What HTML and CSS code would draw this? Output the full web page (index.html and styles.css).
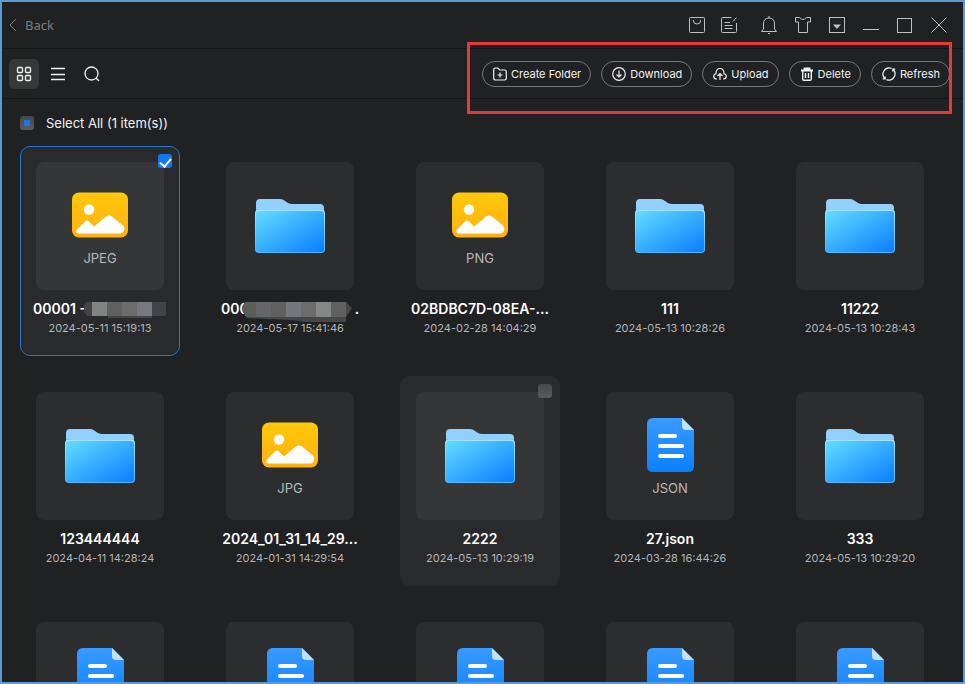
FILE: index.html
```
<!DOCTYPE html>
<html lang="en">
<head>
<meta charset="utf-8">
<title>Files</title>
<link rel="stylesheet" href="styles.css">
</head>
<body>
<svg class="sprite" aria-hidden="true">
  <defs>
    <linearGradient id="gFolder" x1="0" y1="0" x2="1" y2="1"><stop offset="0" stop-color="#64dcff"/><stop offset=".5" stop-color="#36adff"/><stop offset="1" stop-color="#0a7dff"/></linearGradient>
    <linearGradient id="gEdge" x1="0" y1="0" x2="0" y2="1"><stop offset="0" stop-color="#a5e6ff"/><stop offset="1" stop-color="#4fb6ff"/></linearGradient>
    <linearGradient id="gImage" x1="0" y1="0" x2="0" y2="1"><stop offset="0" stop-color="#ffc90a"/><stop offset="1" stop-color="#ffb012"/></linearGradient>
    <linearGradient id="gDoc" x1="0" y1="0" x2="0" y2="1"><stop offset="0" stop-color="#3a9bff"/><stop offset="1" stop-color="#0a80ff"/></linearGradient>
  </defs>
  <symbol id="folder" viewBox="0 0 70 54">
    <path d="M1 14V4q0-4 4-4h20q3 0 5 2l3 2q2 1 4 1h28q4 0 4 4v5z" fill="#92d0ff"/>
    <path d="M1 10.500h68" stroke="#78bdf3" stroke-width="1"/>
    <rect y="10.500" width="70" height="43.500" rx="4" fill="url(#gEdge)"/>
    <rect x="1" y="12" width="68" height="41" rx="3" fill="url(#gFolder)"/>
  </symbol>
  <symbol id="image" viewBox="0 0 56 45">
    <rect width="56" height="45" rx="7" fill="url(#gImage)"/>
    <circle cx="17" cy="17" r="5.200" fill="#fff"/>
    <path d="M6 41q-3-1-1-4l8-8q2-2 4 0l5 5 12-10q3-2 6 0l11 9q2 2 1 5t-4 3z" fill="#fff"/>
  </symbol>
  <symbol id="doc" viewBox="0 0 47 54">
    <path d="M6 0h29l12 12v36q0 6-6 6H6q-6 0-6-6V6q0-6 6-6z" fill="url(#gDoc)"/>
    <path d="M35 0l12 12h-8q-4 0-4-4z" fill="#c4dfff"/>
    <path d="M13 18h15M13 28h22M13 38h22" stroke="#fff" stroke-width="4" stroke-linecap="round"/>
  </symbol>
</svg>
<div class="window">
  <header class="titlebar">
    <button class="back"><svg width="8" height="14" viewBox="0 0 8 14"><path d="M7 1L1 7l6 6"/></svg>Back</button>
    <nav class="tools">
      <button aria-label="Store"><svg viewBox="0 0 18 18"><rect x="1.500" y="1.500" width="15" height="15" rx="1"/><path d="M5.500 4v1q0 3 3.500 3t3.500-3V4"/></svg></button>
      <button class="notes" aria-label="Notes"><svg viewBox="0 0 18 18"><path d="M11.500 1.500h-9q-1 0-1 1v13q0 1 1 1h13q1 0 1-1V7M4.500 6.500H10M4.500 9.500h8M4.500 12.500h8M13 5.500L16.500 1.500"/></svg></button>
      <button aria-label="Notifications"><svg viewBox="0 0 18 18"><path d="M9 0v2M3.500 13V8q0-6 5.500-6t5.500 6v5l2 2.500H1.500zM8 17.500h2"/></svg></button>
      <button aria-label="Theme"><svg viewBox="0 0 18 18"><path d="M5.500 1.500q3.500 4 7 0h4v4.500h-3v10.500h-9V6h-3V1.500z"/></svg></button>
      <button aria-label="Menu"><svg viewBox="0 0 18 18"><rect x="1.500" y="1.500" width="15" height="15"/><path class="solid" d="M5 8.500h8L9 13z"/></svg></button>
      <button aria-label="Minimize"><svg viewBox="0 0 18 18"><path d="M1 13.500h16"/></svg></button>
      <button aria-label="Maximize"><svg viewBox="0 0 18 18"><rect x="1.500" y="2.500" width="14" height="14"/></svg></button>
      <button aria-label="Close"><svg viewBox="0 0 18 18"><path d="M1.500 1.500l15 15M16.500 1.500l-15 15"/></svg></button>
    </nav>
  </header>
  <div class="toolbar">
    <div class="views">
      <button class="active" aria-label="Grid view"><svg width="16" height="16" viewBox="0 0 16 16"><rect x="1.500" y="1.500" width="5" height="5" rx="1"/><rect x="9.500" y="1.500" width="5" height="5" rx="1"/><rect x="1.500" y="9.500" width="5" height="5" rx="1"/><rect x="9.500" y="9.500" width="5" height="5" rx="1"/></svg></button>
      <button aria-label="List view"><svg width="16" height="16" viewBox="0 0 16 16"><path d="M1 2.500h14M1 8.500h14M1 13.500h14"/></svg></button>
      <button aria-label="Search"><svg width="16" height="16" viewBox="0 0 16 16"><circle cx="7.500" cy="7.500" r="6.500"/><path d="M12 12l3 3"/></svg></button>
    </div>
    <div class="actions">
      <button><svg viewBox="0 0 14 14"><path d="M.7 11V2.700Q.7 1 2.400 1h2.400l2 2h4.800q1.700 0 1.700 1.700V11.300q0 1.700-1.700 1.700H2.400Q.7 13 .7 11.300zM7 5.500v5M4.500 8h5"/></svg>Create Folder</button>
      <button><svg viewBox="0 0 14 14"><circle cx="7" cy="7" r="6.300"/><path d="M7 3.500v6.500M4.500 7.500L7 10l2.500-2.500"/></svg>Download</button>
      <button><svg viewBox="0 0 14 14"><path d="M4 12H3.500Q.7 12 .7 9.300q0-2 2.300-2.600Q3 1.500 7 1.500t4 5.200q2.300.6 2.300 2.600 0 2.700-2.800 2.700H10M7 13V6.500M4.500 9L7 6.500 9.500 9"/></svg>Upload</button>
      <button><svg viewBox="0 0 14 14"><path d="M1 3.500h12M4.500 3V1.500h5V3" stroke-width="1.800"/><path d="M2.700 3.500V12q0 1.200 1.200 1.200h6.200q1.200 0 1.200-1.200V3.500M5.500 6v5M8.500 6v5" stroke-width="1.400"/></svg>Delete</button>
      <button><svg viewBox="0 0 14 14"><path d="M3 11.700A6.200 6.200 0 0 1 9.500 1.400M11 2.300A6.200 6.200 0 0 1 4.500 12.600M.8 11.800H3.200V9.500M13.200 2.200H10.800V4.500"/></svg>Refresh</button>
    </div>
    <div class="highlight"></div>
  </div>
  <main>
    <label class="select-all"><input type="checkbox" class="check partial">Select All (1 item(s))</label>
    <ul class="files">
      <li class="card selected"><input type="checkbox" class="check" checked aria-label="Select file"><div class="tile labelled"><svg class="image"><use href="#image"/></svg><span>JPEG</span></div><h2 class="name">00001 -<svg class="mosaic" width="83" height="18" viewBox="0 0 83 18"><path d="M2 2h80v12q0 2-3 2H3q-6-7-1-14z" fill="#424447"/><path d="M24 12h44v6H24z" fill="#424346"/><path d="M8 2h15v14H8z" fill="#828383"/><path d="M23 2h15v14H23z" fill="#606061"/><path d="M38 2h15v14H38z" fill="#6c6c6d"/><path d="M53 2h15v14H53z" fill="#78797f"/></svg></h2><time>2024-05-11 15:19:13</time></li>
      <li class="card"><div class="tile"><svg class="folder"><use href="#folder"/></svg></div><h2 class="name">000<svg class="mosaic wide" width="112" height="22" viewBox="0 0 112 22"><path d="M4 2h101l6 6-6 9v6H72l-22-3-44-2q-8-8-2-16z" fill="#464748"/><path d="M4 2h11v15H6q-7-6-2-15z" fill="#5b5c5c"/><path d="M15 2h15v15H15z" fill="#656667"/><path d="M30 2h15v15H30z" fill="#606061"/><path d="M45 2h15v15H45z" fill="#76777d"/><path d="M60 2h15v15H60z" fill="#6c6c6d"/><path d="M75 2h15v15H75z" fill="#858686"/><path d="M90 2h15v15H90z" fill="#606061"/></svg>.</h2><time>2024-05-17 15:41:46</time></li>
      <li class="card"><div class="tile labelled"><svg class="image"><use href="#image"/></svg><span>PNG</span></div><h2 class="name">02BDBC7D-08EA-...</h2><time>2024-02-28 14:04:29</time></li>
      <li class="card"><div class="tile"><svg class="folder"><use href="#folder"/></svg></div><h2 class="name">111</h2><time>2024-05-13 10:28:26</time></li>
      <li class="card"><div class="tile"><svg class="folder"><use href="#folder"/></svg></div><h2 class="name">11222</h2><time>2024-05-13 10:28:43</time></li>
      <li class="card"><div class="tile"><svg class="folder"><use href="#folder"/></svg></div><h2 class="name">123444444</h2><time>2024-04-11 14:28:24</time></li>
      <li class="card"><div class="tile labelled"><svg class="image"><use href="#image"/></svg><span>JPG</span></div><h2 class="name">2024_01_31_14_29...</h2><time>2024-01-31 14:29:54</time></li>
      <li class="card hovered"><input type="checkbox" class="check" aria-label="Select 2222"><div class="tile"><svg class="folder"><use href="#folder"/></svg></div><h2 class="name">2222</h2><time>2024-05-13 10:29:19</time></li>
      <li class="card"><div class="tile labelled"><svg class="doc"><use href="#doc"/></svg><span>JSON</span></div><h2 class="name">27.json</h2><time>2024-03-28 16:44:26</time></li>
      <li class="card"><div class="tile"><svg class="folder"><use href="#folder"/></svg></div><h2 class="name">333</h2><time>2024-05-13 10:29:20</time></li>
      <li class="card"><div class="tile labelled"><svg class="doc"><use href="#doc"/></svg></div></li>
      <li class="card"><div class="tile labelled"><svg class="doc"><use href="#doc"/></svg></div></li>
      <li class="card"><div class="tile labelled"><svg class="doc"><use href="#doc"/></svg></div></li>
      <li class="card"><div class="tile labelled"><svg class="doc"><use href="#doc"/></svg></div></li>
      <li class="card"><div class="tile labelled"><svg class="doc"><use href="#doc"/></svg></div></li>
    </ul>
  </main>
</div>
</body>
</html>
```
FILE: styles.css
```
* { box-sizing: border-box; }
body { margin: 0; background: #202123; color: #f2f2f2; font-family: Inter, "Liberation Sans", sans-serif; }
.sprite { position: absolute; width: 0; height: 0; }
button { margin: 0; padding: 0; border: 0; background: none; color: inherit; font: inherit; }
svg { display: block; flex: none; }
button svg { fill: none; stroke: currentColor; }

.window { display: flex; flex-direction: column; height: 100vh; border: 2px solid #5b9bd5; overflow: hidden; }

.titlebar { display: flex; justify-content: space-between; align-items: center; flex: none; height: 47px; padding: 0 15px 0 7px; border-bottom: 1px solid #161719; }
.back { display: flex; align-items: center; gap: 8px; color: #7d7e80; font: 13px/20px "Noto Sans", sans-serif; }
.tools { display: flex; gap: 16px; color: #bfc0c1; }
.tools svg { width: 18px; height: 18px; }
.tools .notes { margin: 0 6px 0 -2px; }
.tools .solid { fill: currentColor; stroke: none; }

.toolbar { position: relative; display: flex; justify-content: space-between; align-items: center; flex: none; height: 50px; padding: 0 13px 0 7px; border-bottom: 1px solid #161719; }
.views { display: flex; gap: 4px; }
.views button { display: grid; place-items: center; width: 30px; height: 30px; border-radius: 5px; }
.views .active { background: #37383a; }
.views svg { stroke-width: 1.3; }
.actions { display: flex; gap: 10px; }
.actions button { display: flex; align-items: center; gap: 4px; height: 26px; padding: 0 9px 0 10px; border: 1px solid #77787a; border-radius: 13px; font-size: 11px; line-height: 16px; }
.actions svg { width: 14px; height: 14px; stroke-width: 1.2; }
.highlight { position: absolute; top: -7px; right: 11px; width: 485px; height: 72px; border: 3px solid #e33b3b; pointer-events: none; }

main { flex: 1; min-height: 0; overflow: hidden; padding: 14px 18px 0; }
.select-all { display: flex; align-items: center; gap: 12px; height: 20px; font-size: 13px; line-height: 20px; }
.check { appearance: none; flex: none; width: 14px; height: 14px; margin: 0; border-radius: 3px; background: linear-gradient(#464749, #5a5b5d); }
.check:checked { display: grid; justify-content: center; background: #1475f0; }
.check:checked::before { content: ""; width: 5px; height: 9px; margin-top: 2px; border: solid #fff; border-width: 0 2px 2px 0; transform: rotate(40deg); }
.partial::before { content: ""; display: block; width: 6px; height: 6px; margin: 4px; border-radius: 1px; background: #1677f2; }

.files { display: grid; grid-template-columns: repeat(auto-fill, 160px); gap: 20px 30px; margin: 13px 0 0; padding: 0; list-style: none; }
.card { position: relative; height: 210px; padding: 15px; border: 1px solid transparent; border-radius: 10px; text-align: center; }
.card .check { position: absolute; top: 7px; right: 7px; }
.selected, .hovered { background: #292a2c; }
.selected { border-color: #2478cc; }
.tile { display: flex; flex-direction: column; align-items: center; justify-content: center; height: 128px; border-radius: 8px; background: #2c2d2f; }
.selected .tile, .hovered .tile { background: #353638; }
.labelled { justify-content: flex-start; gap: 6px; padding-top: 26px; color: #b8b9ba; font-size: 13px; line-height: 20px; }
.folder { width: 70px; height: 54px; }
.image { width: 56px; height: 54px; }
.doc { width: 47px; height: 54px; }
.name { display: flex; justify-content: center; height: 18px; margin: 10px -8px 0; font-size: 14px; font-weight: 600; line-height: 18px; white-space: nowrap; color: #fff; }
.mosaic { margin-left: -2px; }
.mosaic.wide { margin-left: -8px; margin-right: 2px; }
time { display: block; margin: 2px -8px 0; color: #b4b5b6; font-size: 11px; line-height: 16px; white-space: nowrap; }
```
